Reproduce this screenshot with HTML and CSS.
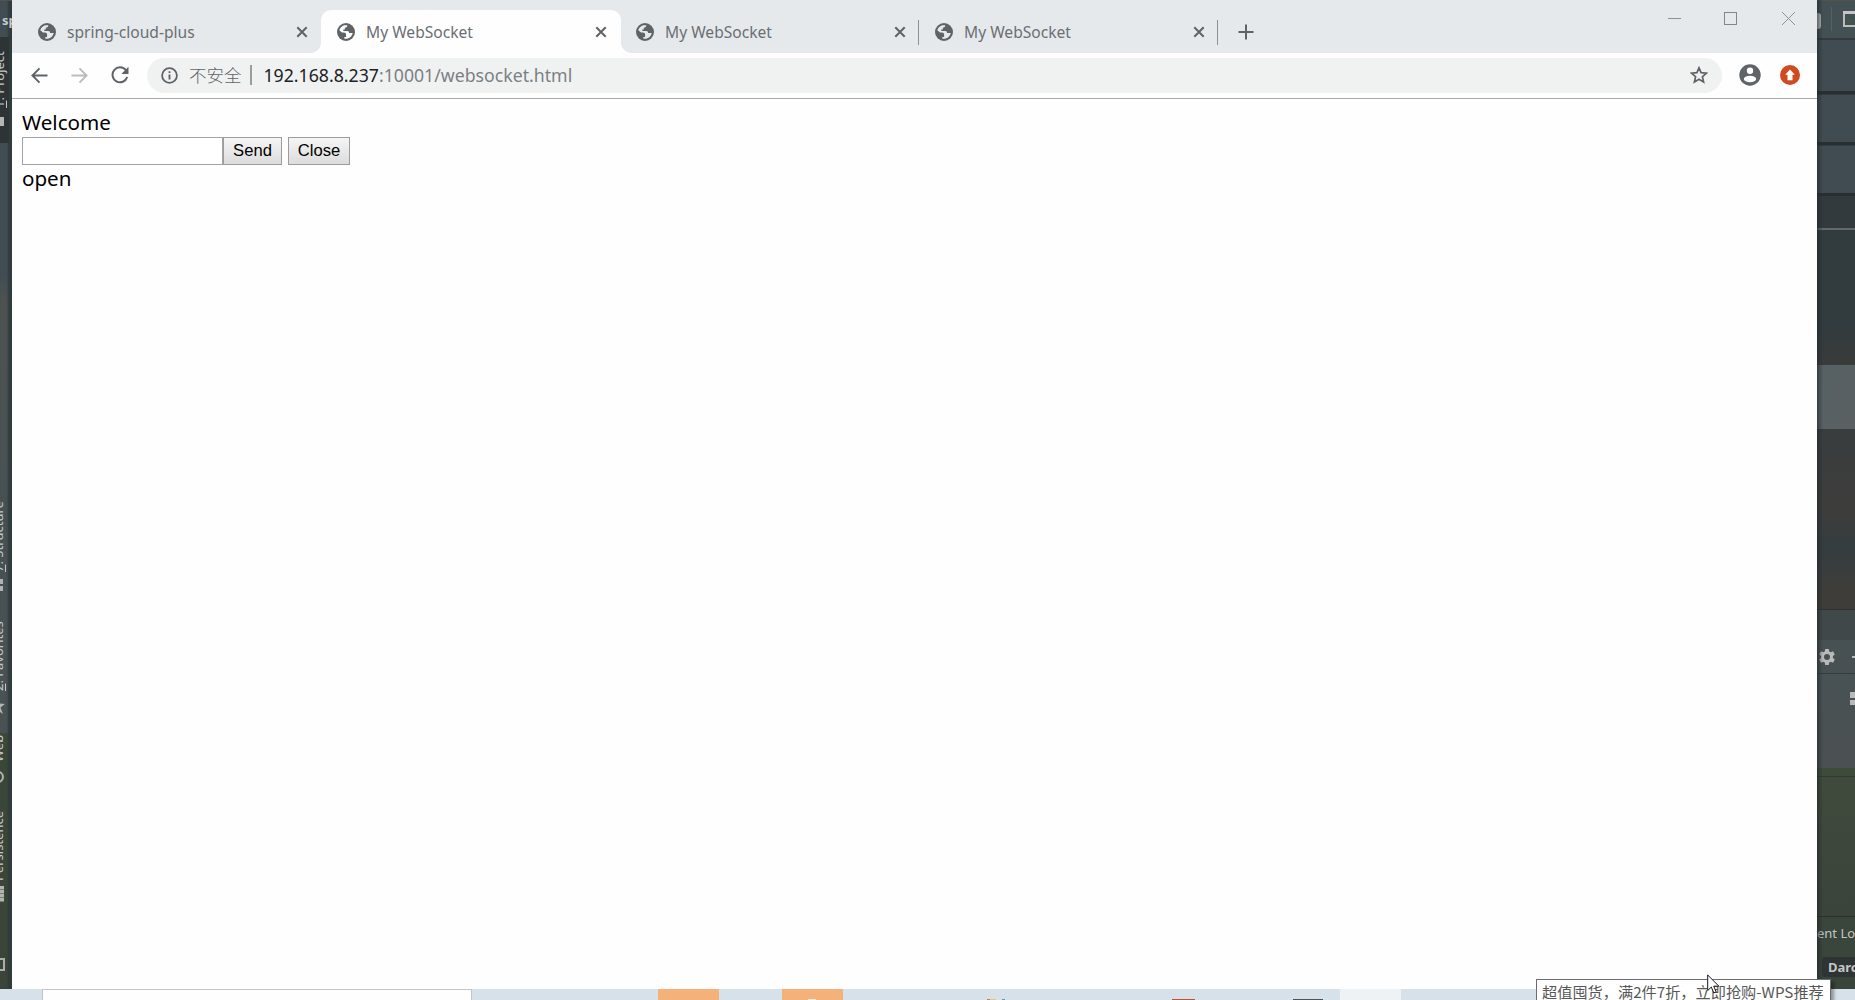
FILE: index.html
```html
<!DOCTYPE html>
<html lang="zh-CN">
<head>
    <meta charset="UTF-8">
    <title>My WebSocket</title>
    <link rel="stylesheet" href="styles.css">
</head>
<body>
    <svg width="0" height="0" class="defs">
        <symbol id="globe" viewBox="0 0 18 18">
            <circle cx="9" cy="9" r="9" fill="#5f6368"/>
            <path d="M2.300 7.300C3 4.300 5.600 2.200 9 2.200h1.300c0 1.600-.9 2.500-2.500 2.500v1.700H6.300V8h4c1.300 0 1.800.9 1.800 2h3.600c-.6 3.300-3.400 5.800-6.700 5.800-.7 0-1.200-.1-1.700-.2V14h1.800v-2.300c0-1.500-.8-2.300-2.300-2.300H5z" fill="currentColor"/>
        </symbol>
        <symbol id="cross" viewBox="0 0 12 12">
            <path d="M1.300 1.300l9.400 9.400M10.700 1.300l-9.400 9.400" fill="none" stroke="#5f6368" stroke-width="2"/>
        </symbol>
    </svg>

    <div class="desktop">
        <div class="ide-left">
            <div class="ide-title">sp</div>
            <div class="tool project"><span><u>1</u>: Project</span><i class="block"></i></div>
            <div class="tool structure"><span><u>7</u>: Structure</span><i class="grid-icon"></i></div>
            <div class="tool favorites"><span><u>2</u>: Favorites</span><svg width="5" height="16"><path d="M-3 0l2 5.500 6 .5-4.500 3.500L3 16l-6-4z" fill="#b3b5b3"/></svg></div>
            <div class="tool web"><span>Web</span><i class="ring"></i></div>
            <div class="tool persistence"><span>Persistence</span><i class="lines"></i></div>
            <i class="corner"></i>
        </div>

        <div class="browser">
            <div class="tab-strip">
                <div class="tab">
                    <svg class="favicon"><use href="#globe"/></svg>
                    <span class="tab-title">spring-cloud-plus</span>
                    <svg class="tab-close"><use href="#cross"/></svg>
                </div>
                <div class="tab active">
                    <svg class="favicon"><use href="#globe"/></svg>
                    <span class="tab-title">My WebSocket</span>
                    <svg class="tab-close"><use href="#cross"/></svg>
                </div>
                <div class="tab divided">
                    <svg class="favicon"><use href="#globe"/></svg>
                    <span class="tab-title">My WebSocket</span>
                    <svg class="tab-close"><use href="#cross"/></svg>
                </div>
                <div class="tab divided">
                    <svg class="favicon"><use href="#globe"/></svg>
                    <span class="tab-title">My WebSocket</span>
                    <svg class="tab-close"><use href="#cross"/></svg>
                </div>
                <svg class="new-tab" viewBox="0 0 16 16"><path d="M8 .5v15M.5 8h15" stroke="#5f6368" stroke-width="2"/></svg>
                <div class="window-buttons">
                    <svg width="13" height="13"><path d="M0 6.500h13" stroke="#8f8f98"/></svg>
                    <svg width="13" height="13"><rect x=".5" y=".5" width="12" height="12" fill="none" stroke="#85858f"/></svg>
                    <svg width="13" height="13"><path d="M0 0l13 13M13 0L0 13" stroke="#929296"/></svg>
                </div>
            </div>

            <div class="toolbar">
                <svg class="nav" viewBox="0 0 18 18"><path d="M17.500 9H2M9 1.500L1.500 9 9 16.500" fill="none" stroke="#5f6368" stroke-width="2"/></svg>
                <svg class="nav" viewBox="0 0 18 18"><path d="M.5 9H16M9 1.500L16.500 9 9 16.500" fill="none" stroke="#babcbe" stroke-width="2"/></svg>
                <svg class="nav" viewBox="0 0 18 18"><path d="M15 4.200A7.500 7.500 0 1 0 16.200 11" fill="none" stroke="#5f6368" stroke-width="2"/><path d="M17.500.8v7.200h-7.200z" fill="#5f6368"/></svg>
                <div class="omnibox">
                    <svg class="info" viewBox="0 0 17 17"><circle cx="8.500" cy="8.500" r="7.400" fill="none" stroke="#5f6368" stroke-width="1.800"/><path d="M8.500 7.500v5M8.500 4.200v1.900" stroke="#5f6368" stroke-width="1.900"/></svg>
                    <span class="insecure">不安全</span>
                    <span class="url"><em>192.168.8.237</em>:10001/websocket.html</span>
                    <svg class="star" viewBox="0 0 18 18"><path d="M9 1.800l2.100 4.900 5.300.5-4 3.500 1.200 5.200L9 13.200l-4.600 2.700 1.200-5.200-4-3.500 5.300-.5z" fill="none" stroke="#5f6368" stroke-width="1.700"/></svg>
                </div>
                <svg class="account" viewBox="0 0 22 22"><circle cx="11" cy="11" r="10.700" fill="#5f6368"/><circle cx="11" cy="6.800" r="3.200" fill="#fff"/><ellipse cx="11" cy="15" rx="6.200" ry="3.300" fill="#fff"/></svg>
                <svg class="update" viewBox="0 0 20 20"><circle cx="10" cy="10" r="10" fill="#cf4a20"/><path d="M10 4.500l4.800 5.200h-2.300v5.500h-5V9.700H5.200z" fill="#fff"/></svg>
            </div>

            <div class="page">
                <div class="welcome">Welcome</div>
                <div class="form">
                    <input type="text"><button class="send">Send</button>
                    <button class="close">Close</button>
                </div>
                <div class="message">open</div>
            </div>
        </div>

        <div class="ide-right">
            <div class="ide-toolbar">
                <i class="dropdown"></i>
                <i class="separator"></i>
                <svg width="12" height="16"><path d="M1 1h14v14H1z" fill="#435051" stroke="#bcbcbc" stroke-width="2"/><path d="M0 0h12v3H0z" fill="#c5c5c5"/><path d="M4 6l7 4-7 4z" fill="#41584a"/></svg>
            </div>
            <div class="bar"></div>
            <div class="bar"></div>
            <div class="bar"></div>
            <div class="editor-tab"></div>
            <div class="editor"></div>
            <div class="selection"></div>
            <div class="editor lower"></div>
            <div class="panel-gap"></div>
            <div class="panel-head">
                <svg width="16" height="16" viewBox="0 0 16 16"><path d="M6.200 0h3.600l.4 2.400 1.500.8 2.300-.9 1.800 3.100-1.900 1.500v2.200l1.900 1.500-1.800 3.100-2.300-.9-1.500.8-.4 2.400H6.200l-.4-2.400-1.500-.8-2.300.9-1.800-3.100 1.900-1.500V6.900L.2 5.400 2 2.300l2.300.9 1.500-.8zM8 5a3 3 0 1 0 0 6 3 3 0 0 0 0-6z" fill="#b9b9b9" fill-rule="evenodd"/></svg>
                <i class="minus"></i>
            </div>
            <div class="panel-body"><i class="split"></i></div>
            <div class="panel-edge"></div>
            <div class="panel-grass"></div>
            <div class="event-log">ent Log</div>
            <div class="theme"><span>Darcula</span></div>
        </div>
    </div>

    <div class="taskbar">
        <div class="search"></div>
        <div class="task first"></div>
        <div class="task second"><i></i></div>
        <div class="app-blue"></div>
        <div class="app-red"></div>
        <div class="app-dark"></div>
        <div class="task light"></div>
    </div>

    <div class="tooltip">超值囤货，满2件7折，立即抢购-WPS推荐</div>
    <svg class="cursor" viewBox="0 0 13 20"><path d="M.7 1v15.500l3.600-3.400 2.500 5.800 2.400-1-2.500-5.700h5.200z" fill="#fff" stroke="#16161e"/></svg>
</body>
</html>
```

FILE: styles.css
```css
* {
    box-sizing: border-box;
}
html {
    height: 1000px;
    overflow: hidden;
}
body {
    margin: 0;
    height: 1000px;
    overflow: hidden;
    position: relative;
    background: #d7e1ea;
    font-family: "Noto Sans", "Noto Sans CJK SC", sans-serif;
}
svg {
    display: block;
    flex: none;
}
.defs {
    position: absolute;
}
.desktop {
    display: flex;
    height: 989px;
    overflow: hidden;
}

/* IDE, left edge */
.ide-left {
    width: 12px;
    overflow: hidden;
    background: linear-gradient(#414d52 0, #414d52 275px, #4d5251 300px, #4b5253 440px, #465153 500px, #495153 732px, #3a4739 734px, #3a4438 100%);
    box-shadow: inset -4px 0 2px #303b3d;
    display: flex;
    flex-direction: column;
    color: #c4c8ca;
}
.ide-title {
    height: 38px;
    padding: 11px 0 0 2px;
    border-bottom: 1px solid #323536;
    border-top: 1px solid #53524e;
    font-size: 13px;
    line-height: 16px;
    font-weight: bold;
    flex: none;
}
.tool {
    flex: none;
    width: 9px;
    display: flex;
    flex-direction: column;
    align-items: flex-start;
}
.tool span {
    writing-mode: vertical-rl;
    transform: rotate(180deg);
    line-height: 16px;
    margin-left: -10px;
    white-space: nowrap;
    font-size: 13px;
}
.project {
    height: 105px;
    padding-top: 9px;
    background: #2e3436;
}
.project span {
    height: 61px;
    margin-left: -9px;
}
.block {
    width: 4px;
    height: 9px;
    margin-top: 9px;
    background: #b5b5b5;
}
.structure {
    margin-top: 356px;
}
.structure span {
    height: 73px;
}
.grid-icon {
    width: 3px;
    height: 12px;
    margin-top: 7px;
    background: linear-gradient(#b0b3b4 5px, transparent 5px, transparent 7px, #b0b3b4 7px);
}
.favorites {
    margin-top: 30px;
}
.favorites span {
    height: 70px;
}
.favorites svg {
    margin-top: 7px;
}
.web {
    margin-top: 22px;
}
.web span {
    height: 26px;
}
.ring {
    width: 12px;
    height: 12px;
    margin: 9px 0 0 -8px;
    border: 2px solid #b0b3b0;
    border-radius: 50%;
}
.persistence {
    margin-top: 28px;
}
.persistence span {
    height: 70px;
}
.lines {
    width: 4px;
    height: 16px;
    margin-top: 5px;
    background: repeating-linear-gradient(#b3b5b3 0 3px, #777d77 3px 4px);
}
.corner {
    width: 10px;
    height: 13px;
    margin: 56px 0 0 -5px;
    border: 2px solid #a9ada9;
    flex: none;
}

/* Browser window */
.browser {
    width: 1805px;
    background: #fefefe;
    display: flex;
    flex-direction: column;
}
.tab-strip {
    height: 53px;
    padding: 10px 0 0 10px;
    background: #e5e9ec;
    display: flex;
}
.tab {
    width: 299px;
    height: 43px;
    padding: 0 13px 0 16px;
    display: flex;
    align-items: center;
    color: #e5e9ec;
    flex: none;
    position: relative;
}
.tab.active {
    width: 300px;
    margin-right: -1px;
    padding-right: 14px;
    background: #fefefe;
    border-radius: 10px 10px 0 0;
    color: #fefefe;
}
.tab.active::before,
.tab.active::after {
    content: "";
    position: absolute;
    bottom: 0;
    width: 10px;
    height: 10px;
    left: -10px;
    background: radial-gradient(circle at 0 0, transparent 9.5px, #fefefe 10px);
}
.tab.active::after {
    left: 100%;
    background: radial-gradient(circle at 100% 0, transparent 9.5px, #fefefe 10px);
}
.tab.divided::after {
    content: "";
    position: absolute;
    right: 0;
    top: 10px;
    width: 1px;
    height: 25px;
    background: #8d9193;
}
.favicon {
    width: 18px;
    height: 18px;
}
.tab-title {
    margin-left: 11px;
    flex: 1;
    font-size: 15.6px;
    line-height: 22px;
    color: #6b6f73;
}
.tab-close {
    width: 12px;
    height: 12px;
}
.new-tab {
    width: 16px;
    height: 16px;
    margin: 14px 0 0 20px;
}
.window-buttons {
    display: flex;
    gap: 44px;
    margin: 2px 22px 0 auto;
}
.window-buttons svg:first-child {
    margin-left: -1px;
}
.window-buttons svg:nth-child(2) {
    margin-right: 1px;
    margin-left: -1px;
}
.toolbar {
    height: 46px;
    padding: 4px 16px 5px 19px;
    border-bottom: 1px solid #a9a9ab;
    display: flex;
    align-items: center;
}
.nav {
    width: 17px;
    height: 17px;
    margin-right: 23px;
}
.nav:nth-child(3) {
    width: 18px;
    height: 18px;
    margin-right: 18px;
}
.omnibox {
    width: 1575px;
    height: 35px;
    padding: 0 14px 0 14px;
    border-radius: 18px;
    background: #f0f2f2;
    display: flex;
    align-items: center;
}
.info {
    width: 17px;
    height: 17px;
}
.insecure {
    margin-left: 11px;
    padding-right: 8px;
    border-right: 2px solid #9a9da0;
    font: 17.5px/20px "Noto Sans CJK SC", sans-serif;
    font-weight: 300;
    color: #5f6368;
}
.url {
    margin-left: 12px;
    flex: 1;
    font-size: 17.7px;
    line-height: 24px;
    color: #7b8084;
}
.url em {
    font-style: normal;
    color: #202124;
}
.star {
    width: 18px;
    height: 18px;
}
.account {
    width: 22px;
    height: 22px;
    margin-left: 17px;
}
.update {
    width: 20px;
    height: 20px;
    margin-left: 19px;
}
.page {
    padding: 10px;
    color: #000;
    font-size: 20.6px;
    line-height: 28px;
}
.welcome {
    height: 28px;
    line-height: 26px;
}
.message {
    line-height: 26px;
}
.form {
    display: flex;
    height: 28px;
}
.form input {
    width: 201px;
    height: 28px;
    border: 1px solid #a4a4a8;
    padding: 1px;
    background: #fff;
}
.form button {
    height: 28px;
    padding: 0;
    border: 1px solid #9b9ba0;
    border-radius: 0;
    background: linear-gradient(#f5f5f5, #dcdcdc);
    font: 16.6px "Liberation Sans", sans-serif;
    color: #000;
}
.send {
    width: 59px;
}
.form .close {
    width: 62px;
    margin-left: 6px;
}

/* IDE, right edge */
.ide-right {
    width: 38px;
    overflow: hidden;
    background: #323a3c;
    color: #c3c6c7;
    display: flex;
    flex-direction: column;
    position: relative;
}
.ide-right > div {
    flex: none;
}
.ide-right::after {
    content: "";
    position: absolute;
    inset: 0 auto 0 0;
    width: 6px;
    background: linear-gradient(90deg, #20272a99, transparent);
}
.ide-toolbar {
    height: 39px;
    border-top: 1px solid #55524e;
    border-bottom: 1px solid #373a3b;
    background: #435054;
    display: flex;
}
.dropdown {
    width: 4px;
    height: 16px;
    margin-top: 12px;
    border-radius: 0 3px 3px 0;
    background: #bdbdbd;
}
.separator {
    width: 1px;
    height: 24px;
    margin: 6px 11px 0 10px;
    background: #555f64;
}
.ide-toolbar svg {
    margin-top: 10px;
}
.bar {
    height: 51px;
    background: #414c52;
    border-bottom: 3px solid #292f31;
    border-top: 1px solid #323b3f;
}
.bar:nth-child(2) {
    height: 55px;
}
.editor-tab {
    height: 34px;
    border-bottom: 2px solid #626a6e;
    background: #323a3d;
}
.editor {
    height: 135px;
    background: linear-gradient(#323b3e 70%, #3a3b3b);
}
.selection {
    height: 64px;
    background: linear-gradient(120deg, #566165, #5b6062);
}
.editor.lower {
    height: 181px;
    background: linear-gradient(#393d3e, #3d3d3b 45%, #353d40 65%, #3e3d3a 90%);
    border-bottom: 1px solid #2d3132;
}
.panel-gap {
    height: 30px;
    background: #40484a;
}
.panel-head {
    height: 34px;
    padding: 9px 0 0 2px;
    background: #475154;
    border-bottom: 1px solid #343b3d;
    display: flex;
}
.minus {
    width: 6px;
    height: 2px;
    margin: 7px 0 0 17px;
    background: #b9b9b9;
}
.panel-body {
    height: 94px;
    background: linear-gradient(#485255, #4b5051);
    padding: 18px 0 0 33px;
}
.split {
    display: block;
    width: 8px;
    height: 13px;
    background: linear-gradient(#b9b9b9 6px, #485255 6px 8px, #b9b9b9 8px);
}
.panel-edge {
    height: 9px;
    background: #3f4b3a;
    border-bottom: 1px solid #303a32;
}
.panel-grass {
    height: 140px;
    background: linear-gradient(#404a3c, #3b443b);
    border-bottom: 1px solid #2a302d;
}
.event-log {
    height: 40px;
    padding-top: 6px;
    background: #3a453b;
    font-size: 13px;
    line-height: 20px;
    white-space: nowrap;
}
.theme {
    height: 33px;
    padding-left: 5px;
    background: #39443a;
}
.theme span {
    display: block;
    width: 60px;
    height: 20px;
    padding-left: 6px;
    border-radius: 4px;
    background: #2e3334;
    font-size: 13px;
    line-height: 21px;
    font-weight: bold;
}

/* Taskbar */
.taskbar {
    height: 11px;
    background: #d7e1e9;
    display: flex;
}
.search {
    width: 430px;
    margin-left: 42px;
    background: #fefefe;
    border: 1px solid #c2c6ca;
    border-bottom: 0;
}
.task {
    width: 61px;
    background: #f5b17a;
}
.task.first {
    margin-left: 186px;
}
.task.second {
    margin-left: 63px;
}
.task.second i {
    display: block;
    width: 8px;
    height: 1px;
    margin: 10px 0 0 26px;
    background: #f5eee7;
}
.task.light {
    margin-left: 17px;
    background: #eef2f5;
}
.app-blue {
    width: 18px;
    height: 1px;
    margin: 10px 0 0 144px;
    background: linear-gradient(90deg, #de7b38 3px, #efc27c 3px 9px, transparent 9px 15px, #5b9bc8 15px);
}
.app-red {
    width: 23px;
    height: 1px;
    margin: 10px 0 0 167px;
    background: #c9501f;
}
.app-dark {
    width: 30px;
    height: 1px;
    margin: 10px 0 0 98px;
    background: #4e5254;
}
.tooltip {
    position: absolute;
    left: 1536px;
    top: 979px;
    width: 295px;
    height: 21px;
    padding-left: 5px;
    border: 1px solid #6c6b70;
    border-bottom: 0;
    background: #fff;
    box-shadow: 3px 3px 3px #0005;
    font: 15.2px/23px "Noto Sans CJK SC", sans-serif;
    color: #575757;
    white-space: nowrap;
}
.cursor {
    position: absolute;
    left: 1707px;
    top: 974px;
    width: 13px;
    height: 20px;
}
```
